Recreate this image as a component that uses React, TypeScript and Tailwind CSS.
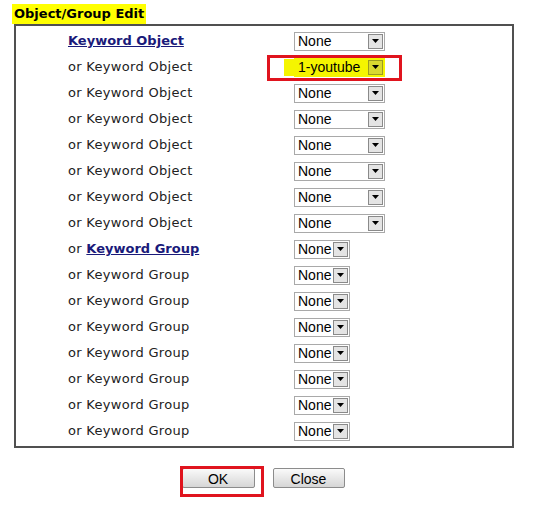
const labelFont = { fontFamily: '"DejaVu Sans", Verdana, sans-serif' }

type Row = { prefix: string; name: string; link?: boolean; value: string; wide: boolean; hl?: boolean }

const rows: Row[] = [
  { prefix: '', name: 'Keyword Object', link: true, value: 'None', wide: true },
  { prefix: 'or ', name: 'Keyword Object', value: '1-youtube', wide: true, hl: true },
  ...Array.from({ length: 6 }, () => ({ prefix: 'or ', name: 'Keyword Object', value: 'None', wide: true })),
  { prefix: 'or ', name: 'Keyword Group', link: true, value: 'None', wide: false },
  ...Array.from({ length: 7 }, () => ({ prefix: 'or ', name: 'Keyword Group', value: 'None', wide: false })),
]

function FakeSelect({ value, wide, hl }: { value: string; wide: boolean; hl?: boolean }) {
  return (
    <div className="relative">
      {hl && <div className="absolute left-[-10px] top-[1px] h-[17px] w-[100px] bg-[#f5f500]" />}
      <div
        className={`relative flex h-[19px] items-center border ${hl ? 'border-[#f5f500]' : 'border-[#a9a9a9]'} ${wide ? 'w-[91px]' : 'w-[56px]'}`}
      >
        <span className="flex-1 pl-[3px] text-[14px] leading-none text-black" style={{ fontFamily: '"Liberation Sans", Arial, sans-serif' }}>
          {value}
        </span>
        <span className={`mr-[1px] flex h-[15px] w-[15px] items-center justify-center border ${hl ? 'border-[#9c9c20] bg-[#d8d830]' : 'border-[#8a8a8a] bg-[#e4e4e4]'}`}>
          <svg width="7" height="4" viewBox="0 0 7 4">
            <path d="M0 0h7L3.5 4z" fill="#000" />
          </svg>
        </span>
      </div>
    </div>
  )
}

export default function App() {
  return (
    <div className="relative h-[522px] w-[542px] bg-white" style={labelFont}>
      <div className="flex h-[24px] items-end pl-[12px]">
        <span className="block bg-[#ffff00] px-[2px] text-[13px] font-bold leading-[20px] text-black">Object/Group Edit</span>
      </div>

      <div className="ml-[14px] w-[500px] border-2 border-[#505050] pb-[2px] pt-[2px]">
        {rows.map((r, i) => (
          <div key={i} className="flex h-[26px] items-center">
            <div className="w-[278px] pl-[52px] text-[13px] tracking-[0.3px] text-[#222]">
              {r.prefix}
              {r.link ? <span className="font-bold tracking-normal text-[#1a1a7a] underline">{r.name}</span> : r.name}
            </div>
            <FakeSelect value={r.value} wide={r.wide} hl={r.hl} />
          </div>
        ))}
      </div>

      <div className="mt-[20px] flex justify-center gap-[18px] pr-[16px]">
        <button className="h-[20px] w-[73px] rounded-[2px] border border-[#8c8c8c] bg-gradient-to-b from-[#fafafa] to-[#d6d6d6] text-[14px] text-black" style={{ fontFamily: '"Liberation Sans", Arial, sans-serif' }}>
          OK
        </button>
        <button className="h-[20px] w-[72px] rounded-[2px] border border-[#8c8c8c] bg-gradient-to-b from-[#fafafa] to-[#d6d6d6] text-[14px] text-black" style={{ fontFamily: '"Liberation Sans", Arial, sans-serif' }}>
          Close
        </button>
      </div>

      {/* red callouts */}
      <div className="absolute left-[267px] top-[55px] h-[26px] w-[135px] border-[3px] border-[#e0141e]" />
      <div className="absolute left-[180px] top-[466px] h-[31px] w-[84px] border-[3px] border-[#e0141e]" />
    </div>
  )
}
